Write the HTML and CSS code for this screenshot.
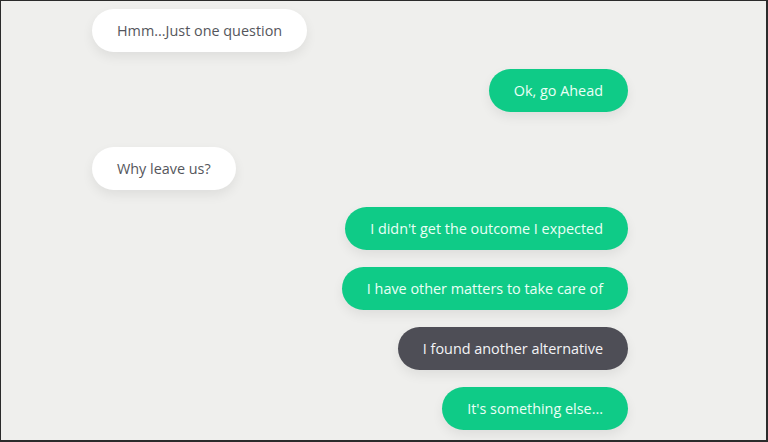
FILE: index.html
```html
<!DOCTYPE html>
<html lang="en">
<head>
<meta charset="utf-8">
<title>Chat</title>
<link rel="stylesheet" href="styles.css">
</head>
<body>
<div class="frame">
  <div class="chat">
    <div class="msg bot">Hmm...Just one question</div>
    <div class="msg user">Ok, go Ahead</div>
    <div class="msg bot spaced">Why leave us?</div>
    <div class="msg user">I didn't get the outcome I expected</div>
    <div class="msg user">I have other matters to take care of</div>
    <div class="msg user selected">I found another alternative</div>
    <div class="msg user">It's something else...</div>
  </div>
</div>
</body>
</html>
```
FILE: styles.css
```css
html, body {
  margin: 0;
  padding: 0;
}
body {
  width: 768px;
  height: 442px;
  overflow: hidden;
  font-family: "Open Sans", "Noto Sans", sans-serif;
}
.frame {
  box-sizing: border-box;
  width: 768px;
  height: 442px;
  background: #efefed;
  border-top: 1px solid #2b2b2b;
  border-left: 1px solid #2b2b2b;
  border-right: 2px solid #2b2b2b;
  border-bottom: 2px solid #2b2b2b;
  overflow: hidden;
}
.chat {
  display: flex;
  flex-direction: column;
  gap: 17px;
  padding: 8px 138px 0 91px;
}
.msg {
  height: 43px;
  line-height: 43px;
  padding: 0 25px;
  border-radius: 22px;
  font-size: 14.4px;
  font-weight: 500;
  white-space: nowrap;
  box-shadow: 0 5px 12px rgba(0, 0, 0, 0.07);
}
.bot {
  align-self: flex-start;
  background: #ffffff;
  color: #55565c;
}
.spaced {
  margin-top: 18px;
}
.user {
  align-self: flex-end;
  background: #0fcb87;
  color: #eafff6;
}
.selected {
  background: #4e4e56;
  color: #f4f4f6;
}
```
